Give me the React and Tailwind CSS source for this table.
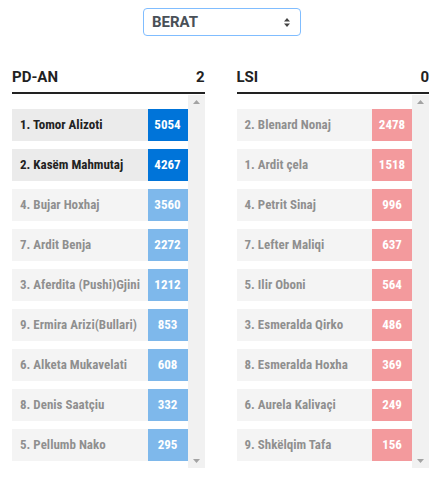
const left = {
  name: 'PD-AN',
  seats: 2,
  color: 'bg-[#0074d9]',
  rows: [
    ['1. Tomor Alizoti', 5054, true],
    ['2. Kasëm Mahmutaj', 4267, true],
    ['4. Bujar Hoxhaj', 3560],
    ['7. Ardit Benja', 2272],
    ['3. Aferdita (Pushi)Gjini', 1212],
    ['9. Ermira Arizi(Bullari)', 853],
    ['6. Alketa Mukavelati', 608],
    ['8. Denis Saatçiu', 332],
    ['5. Pellumb Nako', 295],
  ],
};

const right = {
  name: 'LSI',
  seats: 0,
  color: 'bg-[#e8383d]',
  rows: [
    ['2. Blenard Nonaj', 2478],
    ['1. Ardit çela', 1518],
    ['4. Petrit Sinaj', 996],
    ['7. Lefter Maliqi', 637],
    ['5. Ilir Oboni', 564],
    ['3. Esmeralda Qirko', 486],
    ['8. Esmeralda Hoxha', 369],
    ['6. Aurela Kalivaçi', 249],
    ['9. Shkëlqim Tafa', 156],
  ],
};

function Party({ party }) {
  return (
    <div className="w-[194px]">
      <div className="flex items-center justify-between border-b-2 border-[#222] pb-[6px] text-[15px] leading-[18px] font-bold text-[#222]">
        <span>{party.name}</span>
        <span>{party.seats}</span>
      </div>
      <div className="mt-px flex h-[373px] overflow-hidden">
        <div className="flex-1 pt-[14px] space-y-2">
          {party.rows.map(([name, votes, elected]) => (
            <div
              key={name}
              className={'flex h-8 items-center bg-[#ebebeb] ' + (elected ? '' : 'opacity-50')}
            >
              <div className="flex-1 truncate pl-2 text-[13px] font-bold text-[#222] [font-family:'Roboto_Condensed','Liberation_Sans_Narrow','DejaVu_Sans_Condensed',Roboto,sans-serif]">
                {name}
              </div>
              <div className={'flex h-8 w-10 items-center justify-center text-[13px] font-bold text-white [font-family:"Roboto_Condensed","Liberation_Sans_Narrow","DejaVu_Sans_Condensed",Roboto,sans-serif] ' + party.color}>
                {votes}
              </div>
            </div>
          ))}
        </div>
        <div className="flex w-[17px] flex-col items-center justify-between bg-[#f1f1f1] py-[5px]">
          <svg width="7" height="4" viewBox="0 0 7 4"><path d="M3.5 0L7 4H0z" fill="#a3a3a3" /></svg>
          <svg width="7" height="4" viewBox="0 0 7 4"><path d="M0 0H7L3.5 4z" fill="#a3a3a3" /></svg>
        </div>
      </div>
    </div>
  );
}

export default function App() {
  return (
    <div className="min-h-[483px] bg-white px-3 pt-2 font-['Roboto',sans-serif]">
      <div className="flex justify-center">
        <div className="ml-[3px] flex h-7 w-[158px] items-center justify-between rounded border border-[#80bdff] pl-2 pr-[10px] text-[15px] font-bold uppercase text-[#495057]">
          <span>Berat</span>
          <svg width="6" height="9" viewBox="0 0 6 9"><path d="M3 0L6 3.5H0zM0 5.5H6L3 9z" fill="#444" /></svg>
        </div>
      </div>
      <div className="mt-8 flex gap-8">
        <Party party={left} />
        <Party party={right} />
      </div>
    </div>
  );
}
